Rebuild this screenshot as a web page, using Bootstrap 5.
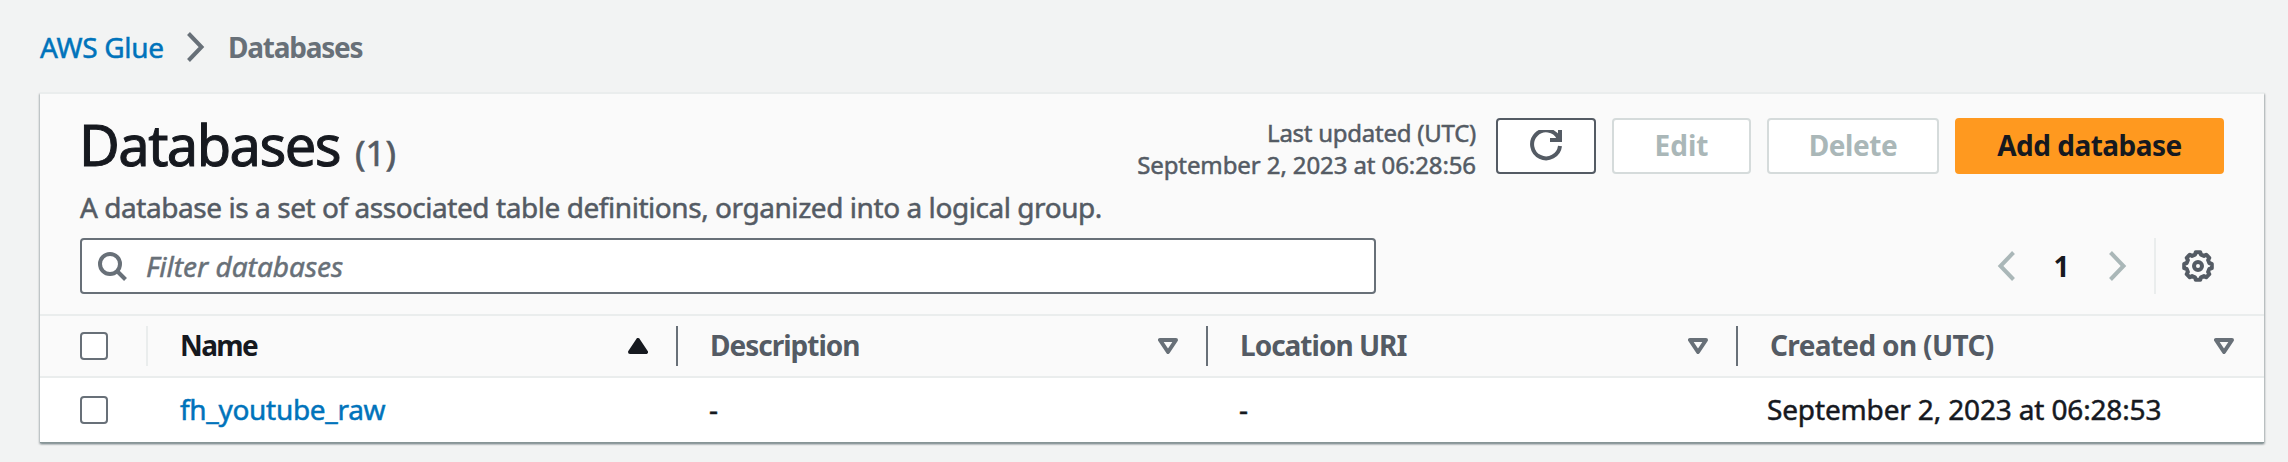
<!DOCTYPE html>
<html lang="en">
<head>
<meta charset="utf-8">
<meta name="viewport" content="width=device-width, initial-scale=1">
<title>AWS Glue - Databases</title>
<link href="https://cdn.jsdelivr.net/npm/bootstrap@5.3.0/dist/css/bootstrap.min.css" rel="stylesheet">
<style>
  body { background: #f2f3f3; color: #16191f; font: 28px/40px "Noto Sans", "Open Sans", sans-serif; min-height: 100vh; -webkit-text-stroke: .5px currentColor; }
  a { color: #0073bb; text-decoration: none; }
  svg { display: block; flex: none; fill: none; stroke: currentColor; stroke-width: 4; }
  .crumbs { height: 92px; padding: 2px 40px 0; }
  .crumbs a { letter-spacing: -.3px; width: 146px; }
  .crumbs span { letter-spacing: -1.25px; margin-left: 22px; color: #687078; }
  .crumbs svg { color: #687078; }
  .fw-bold, th, .btn { -webkit-text-stroke-width: 0; }
  .panel { margin: 0 24px 0 40px; border-top: 2px solid #eaeded; background: #fff;
    box-shadow: 0 1px 0 #879596, 0 2px 2px rgba(0,28,36,.35), 1px 2px 2px rgba(0,28,36,.2), -1px 2px 2px rgba(0,28,36,.15); }
  .panel-head { background: #fafafa; padding: 20px 40px; height: 220px; }
  h1 { font-size: 56px; line-height: 60px; font-weight: 400; letter-spacing: -1.55px; margin: 0 0 0 -1px; -webkit-text-stroke: 1px currentColor; }
  h1 small { font-size: 35px; letter-spacing: 0; color: #545b64; margin-left: 2px; -webkit-text-stroke-width: .6px; }
  .desc { color: #545b64; letter-spacing: -.44px; margin: 13px 0 11px; white-space: nowrap; }
  .stamp { color: #545b64; font-size: 24px; line-height: 32px; margin: -1px 20px 0 0; letter-spacing: -.1px; }
  .stamp div:first-child { letter-spacing: -.25px; }
  .actions { gap: 16px; margin-top: 4px; height: 56px; }
  .btn { --bs-btn-border-radius: 4px; border-width: 2px; height: 56px; padding: 0 0 2px; font-size: 28px; font-weight: 700; line-height: 1; background: #fff; color: #545b64; border-color: #545b64; }
  .btn:disabled { background: #fff; color: #aab7b8; border-color: #d5dbdb; opacity: 1; }
  .btn-refresh { width: 100px; padding: 0; margin-left: -16px; }
  .btn-refresh svg { stroke-width: 2; }
  .btn-edit { width: 139px; }
  .btn-delete { width: 172px; letter-spacing: -.4px; }
  .btn-add { width: 269px; letter-spacing: -.5px; background: #ff991f; border-color: #ff991f; color: #16191f; }
  .search { width: 1296px; height: 56px; border: 2px solid #687078; border-radius: 4px; background: #fff; color: #687078; padding: 0 14px; gap: 18px; }
  .pager { padding-right: 10px; }
  .dim { color: #aab7b8; }
  .page-no { width: 91px; text-align: center; padding-right: 2px; }
  .rule { width: 2px; height: 56px; background: #eaeded; margin: 0 26px; }
  .db-table { table-layout: fixed; width: 100%; border-collapse: separate; border-spacing: 0; }
  .db-table th { height: 64px; background: #fafafa; border-top: 2px solid #eaeded; border-bottom: 2px solid #eaeded; padding: 0; vertical-align: middle; color: #545b64; }
  .db-table td { height: 64px; padding: 0 0 2px 31px; white-space: nowrap; vertical-align: middle; }
  .db-table td:nth-child(2) { padding-left: 32px; }
  .db-table td:last-child { padding-left: 29px; }
  .db-table .pick { padding: 0 0 0 40px; }
  .cell { height: 40px; padding: 0 28px 0 32px; border-right: 2px solid #687078; }
  .cell span { margin-top: -2px; }
  th:last-child .cell { border-right: 0; padding-right: 30px; }
  .pick .cell { padding: 0; border-color: #eaeded; }
  .cell svg { color: #687078; stroke-linejoin: round; }
  .form-check-input[type=checkbox] { width: 28px; height: 28px; margin: 0; border: 2px solid #687078; border-radius: 4px; display: block; float: none; }
</style>
</head>
<body>
<nav class="crumbs d-flex align-items-center">
  <a href="#">AWS Glue</a>
  <svg width="20" height="32"><path d="M2.5 2.5 15.5 16 2.5 29.5"/></svg>
  <span class="fw-bold">Databases</span>
</nav>

<main class="panel">
  <div class="panel-head">
    <div class="d-flex justify-content-between" style="height:60px">
      <h1>Databases <small>(1)</small></h1>
      <div class="actions d-flex">
        <div class="stamp text-end">
          <div>Last updated (UTC)</div>
          <div>September 2, 2023 at 06:28:56</div>
        </div>
        <button class="btn btn-refresh d-flex align-items-center justify-content-center" aria-label="Refresh">
          <svg width="32" height="32" viewBox="0 0 16 16"><path d="M10 5h5V0M15 8a7 7 0 1 1-.7-4"/></svg>
        </button>
        <button class="btn btn-edit" disabled>Edit</button>
        <button class="btn btn-delete" disabled>Delete</button>
        <button class="btn btn-add">Add database</button>
      </div>
    </div>
    <p class="desc">A database is a set of associated table definitions, organized into a logical group.</p>
    <div class="d-flex justify-content-between align-items-center">
      <div class="search d-flex align-items-center">
        <svg width="32" height="32"><circle cx="14" cy="14" r="10"/><path d="m20.5 20.5 9 9"/></svg>
        <em>Filter databases</em>
      </div>
      <div class="pager d-flex align-items-center">
        <svg class="dim" width="20" height="32"><path d="M16.5 2.5 3.5 16 16.5 29.5"/></svg>
        <div class="page-no fw-bold">1</div>
        <svg class="dim" width="20" height="32"><path d="M2.5 2.5 15.5 16 2.5 29.5"/></svg>
        <div class="rule"></div>
        <svg width="32" height="32" viewBox="-16 -16 32 32" color="#545b64" stroke-linejoin="round">
          <circle r="4"/>
          <path d="M13.8-2.2V2.2L11.3 3 10.1 5.9 11.3 8.2 8.2 11.3 5.9 10.1 3 11.3 2.2 13.8H-2.2L-3 11.3-5.9 10.1-8.2 11.3-11.3 8.2-10.1 5.9-11.3 3-13.8 2.2V-2.2L-11.3-3-10.1-5.9-11.3-8.2-8.2-11.3-5.9-10.1-3-11.3-2.2-13.8H2.2L3-11.3 5.9-10.1 8.2-11.3 11.3-8.2 10.1-5.9 11.3-3Z"/>
        </svg>
      </div>
    </div>
  </div>

  <table class="db-table">
    <colgroup><col style="width:108px"><col style="width:530px"><col style="width:530px"><col style="width:530px"><col></colgroup>
    <thead>
      <tr>
        <th class="pick"><div class="cell d-flex align-items-center"><input class="form-check-input" type="checkbox" aria-label="Select all"></div></th>
        <th><div class="cell d-flex align-items-center justify-content-between" style="color:#16191f"><span style="letter-spacing:-1.6px">Name</span>
          <svg width="20" height="16" style="color:#16191f"><path fill="currentColor" d="M10 2 18 14H2Z"/></svg></div></th>
        <th><div class="cell d-flex align-items-center justify-content-between"><span style="letter-spacing:-1px">Description</span>
          <svg width="20" height="16"><path d="M2 2H18L10 14Z"/></svg></div></th>
        <th><div class="cell d-flex align-items-center justify-content-between"><span style="letter-spacing:-1px">Location URI</span>
          <svg width="20" height="16"><path d="M2 2H18L10 14Z"/></svg></div></th>
        <th><div class="cell d-flex align-items-center justify-content-between"><span style="letter-spacing:-.65px">Created on (UTC)</span>
          <svg width="20" height="16"><path d="M2 2H18L10 14Z"/></svg></div></th>
      </tr>
    </thead>
    <tbody>
      <tr>
        <td class="pick"><input class="form-check-input" type="checkbox" aria-label="Select fh_youtube_raw"></td>
        <td style="letter-spacing:-.3px"><a href="#">fh_youtube_raw</a></td>
        <td>-</td>
        <td>-</td>
        <td style="letter-spacing:-.15px">September 2, 2023 at 06:28:53</td>
      </tr>
    </tbody>
  </table>
</main>
<script src="https://cdn.jsdelivr.net/npm/bootstrap@5.3.0/dist/js/bootstrap.bundle.min.js"></script>
</body>
</html>
